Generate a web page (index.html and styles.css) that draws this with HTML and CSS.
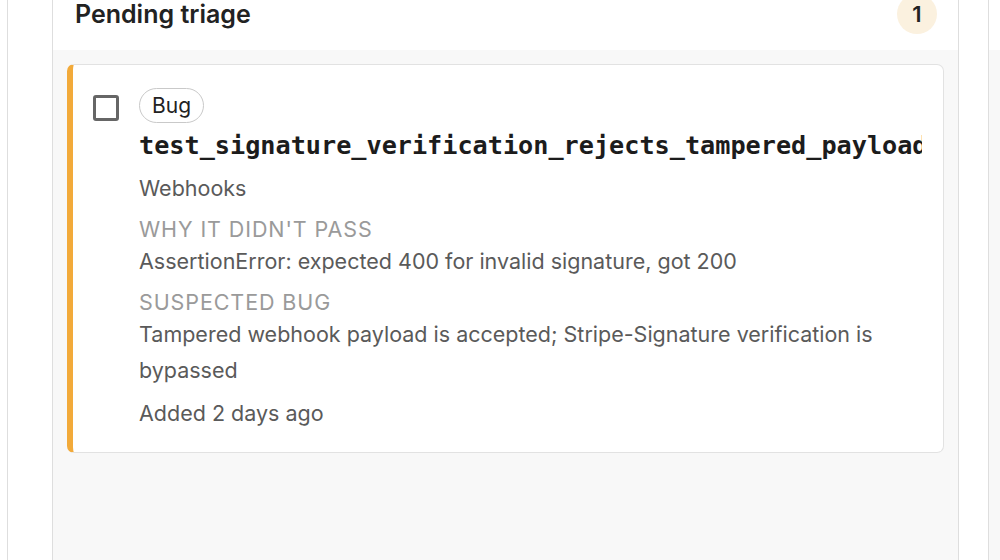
FILE: index.html
```html
<!DOCTYPE html>
<html lang="en">
<head>
<meta charset="utf-8">
<title>Pending triage</title>
<link rel="stylesheet" href="styles.css">
</head>
<body>
<div class="board">
  <section class="column">
    <header class="column-head">
      <h2 class="column-title">Pending triage</h2>
      <span class="count">1</span>
    </header>
    <div class="column-body">
      <article class="card">
        <span class="checkbox" role="checkbox" aria-checked="false"></span>
        <div class="card-main">
          <span class="pill">Bug</span>
          <div class="test-name">test_signature_verification_rejects_tampered_payload</div>
          <div class="suite">Webhooks</div>
          <div class="label">WHY IT DIDN'T PASS</div>
          <div class="text">AssertionError: expected 400 for invalid signature, got 200</div>
          <div class="label">SUSPECTED BUG</div>
          <div class="text">Tampered webhook payload is accepted; Stripe-Signature verification is bypassed</div>
          <div class="added">Added 2 days ago</div>
        </div>
      </article>
    </div>
  </section>
  <section class="column">
    <header class="column-head"></header>
    <div class="column-body"></div>
  </section>
</div>
</body>
</html>
```
FILE: styles.css
```css
* { box-sizing: border-box; }
html, body { margin: 0; padding: 0; background: #fff; overflow: hidden; }
body { font-family: Inter, "Noto Sans", "Liberation Sans", sans-serif; color: #222; }

.board {
  display: flex;
  gap: 29px;
  margin-left: 7px;
  margin-top: -22px;
  padding-left: 44px;
  border-left: 1px solid #dedede;
  height: 620px;
}

.column {
  flex: 0 0 907px;
  width: 907px;
  min-width: 0;
  display: flex;
  flex-direction: column;
  border-left: 1px solid #dedede;
  border-right: 1px solid #dedede;
}

.column-head {
  height: 72px;
  display: flex;
  align-items: center;
  justify-content: space-between;
  padding: 0 21px 0 22px;
  background: #fff;
}

.column-title {
  margin: 0;
  font-size: 25px;
  font-weight: 600;
  color: #222;
}

.count {
  width: 40px;
  height: 40px;
  border-radius: 50%;
  background: #fbf1df;
  display: flex;
  align-items: center;
  justify-content: center;
  font-size: 22px;
  font-weight: 600;
  color: #222;
}

.column-body {
  flex: 1;
  min-width: 0;
  background: #f8f8f8;
  padding: 14px;
}

.card {
  display: flex;
  gap: 20px;
  align-items: flex-start;
  min-width: 0;
  background: #fff;
  border: 1px solid #e2e2e2;
  border-left: 6px solid #f2aa3a;
  border-radius: 7px;
  padding: 23px 21px 21px 20px;
}

.checkbox {
  flex: 0 0 26px;
  width: 26px;
  height: 26px;
  margin-top: 7px;
  border: 3px solid #666;
  border-radius: 3px;
  background: #fff;
}

.card-main {
  flex: 1;
  min-width: 0;
  display: flex;
  flex-direction: column;
  align-items: flex-start;
}

.pill {
  display: inline-flex;
  align-items: center;
  height: 35px;
  padding: 0 12px;
  border: 1px solid #c9c9c9;
  border-radius: 18px;
  font-size: 21px;
  color: #222;
}

.test-name {
  margin-top: 5px;
  width: 100%;
  overflow: hidden;
  white-space: nowrap;
  font-family: "DejaVu Sans Mono", "Liberation Mono", monospace;
  font-weight: 700;
  font-size: 25.2px;
  line-height: 36px;
  color: #1c1c1c;
}

.suite, .text, .added {
  font-size: 21.5px;
  line-height: 36px;
  color: #5a5a5a;
}

.suite { margin-top: 6px; }

.label {
  margin-top: 9px;
  font-size: 21.5px;
  line-height: 28px;
  letter-spacing: 0.9px;
  color: #9a9a9a;
}

.added { margin-top: 7px; }
```
